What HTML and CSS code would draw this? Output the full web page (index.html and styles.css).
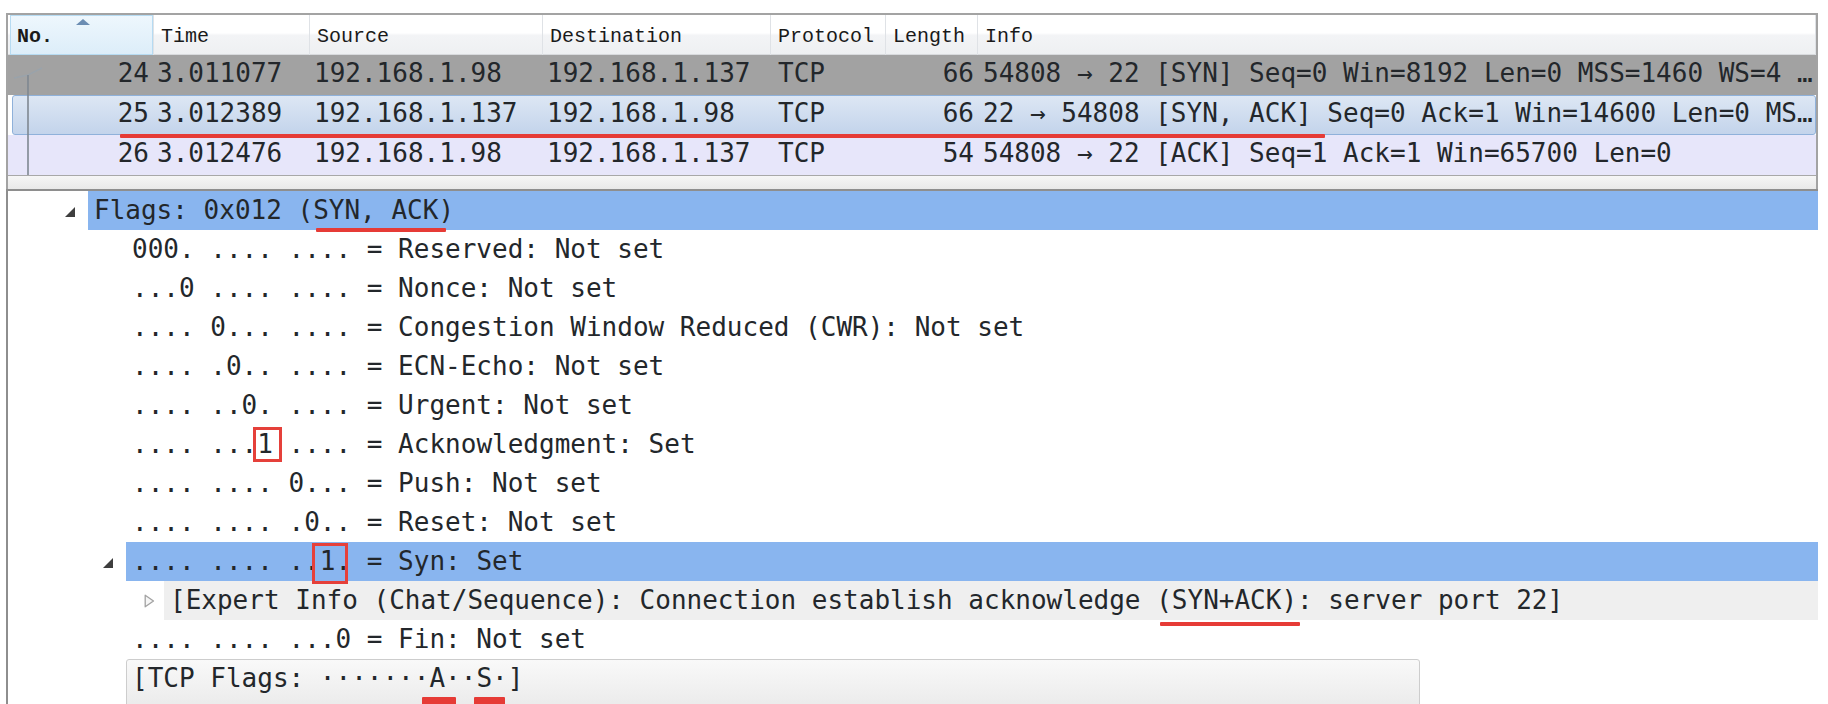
FILE: index.html
```html
<!DOCTYPE html>
<html>
<head>
<meta charset="utf-8">
<title>Wireshark TCP SYN/ACK</title>
<link rel="stylesheet" href="styles.css">
</head>
<body>
<div class="app">
  <section class="plist">
    <div class="phead">
      <div class="hcell sorted">No.<span class="sort"></span></div>
      <div class="hcell">Time</div>
      <div class="hcell">Source</div>
      <div class="hcell">Destination</div>
      <div class="hcell">Protocol</div>
      <div class="hcell">Length</div>
      <div class="hcell">Info</div>
    </div>
    <div class="prows">
      <div class="prow syn">
        <div class="c no">24</div><div class="c">3.011077</div><div class="c">192.168.1.98</div><div class="c">192.168.1.137</div><div class="c">TCP</div><div class="c len">66</div><div class="c">54808 → 22 [SYN] Seq=0 Win=8192 Len=0 MSS=1460 WS=4 …</div>
      </div>
      <div class="prow sel">
        <div class="c no">25</div><div class="c">3.012389</div><div class="c">192.168.1.137</div><div class="c">192.168.1.98</div><div class="c">TCP</div><div class="c len">66</div><div class="c">22 → 54808 [SYN, ACK] Seq=0 Ack=1 Win=14600 Len=0 MS…</div>
      </div>
      <div class="prow tcp">
        <div class="c no">26</div><div class="c">3.012476</div><div class="c">192.168.1.98</div><div class="c">192.168.1.137</div><div class="c">TCP</div><div class="c len">54</div><div class="c">54808 → 22 [ACK] Seq=1 Ack=1 Win=65700 Len=0</div>
      </div>
      <svg class="conv" width="60" height="120" viewBox="0 0 60 120">
        <path d="M6 23 L20 20 L34 13" fill="none" stroke="#9aa3ab" stroke-width="1.4"/>
        <path d="M20 20 V120" fill="none" stroke="#7f8891" stroke-width="1.6"/>
      </svg>
      <div class="ann-line"></div>
    </div>
    <div class="hscroll"></div>
  </section>

  <section class="details">
    <div class="drow l0 sel"><span class="arr"><svg width="10" height="10" viewBox="0 0 10 10"><path d="M10 0 L10 10 L0 10 Z" fill="#3e3e3e"/></svg></span><span class="lbl">Flags: 0x012 (<span class="ul ul-flags">SYN, ACK</span>)</span></div>
    <div class="drow l1"><span class="arr"></span><span class="lbl">000. .... .... = Reserved: Not set</span></div>
    <div class="drow l1"><span class="arr"></span><span class="lbl">...0 .... .... = Nonce: Not set</span></div>
    <div class="drow l1"><span class="arr"></span><span class="lbl">.... 0... .... = Congestion Window Reduced (CWR): Not set</span></div>
    <div class="drow l1"><span class="arr"></span><span class="lbl">.... .0.. .... = ECN-Echo: Not set</span></div>
    <div class="drow l1"><span class="arr"></span><span class="lbl">.... ..0. .... = Urgent: Not set</span></div>
    <div class="drow l1"><span class="arr"></span><span class="lbl">.... ...<span class="mk mk-ack">1</span> .... = Acknowledgment: Set</span></div>
    <div class="drow l1"><span class="arr"></span><span class="lbl">.... .... 0... = Push: Not set</span></div>
    <div class="drow l1"><span class="arr"></span><span class="lbl">.... .... .0.. = Reset: Not set</span></div>
    <div class="drow l1 sel"><span class="arr"><svg width="10" height="10" viewBox="0 0 10 10"><path d="M10 0 L10 10 L0 10 Z" fill="#3e3e3e"/></svg></span><span class="lbl">.... .... ..<span class="mk mk-syn">1</span>. = Syn: Set</span></div>
    <div class="drow l2 expert"><span class="arr arr-c"><svg width="11" height="14" viewBox="0 0 11 14"><path d="M1.2 1.2 L9.5 7 L1.2 12.8 Z" fill="#f6f6f6" stroke="#a2a2a2" stroke-width="1.3" stroke-linejoin="round"/></svg></span><span class="lbl">[Expert Info (Chat/Sequence): Connection establish acknowledge <span class="ul ul-expert">(SYN+ACK)</span>: server port 22]</span></div>
    <div class="drow l1"><span class="arr"></span><span class="lbl">.... .... ...0 = Fin: Not set</span></div>
    <div class="drow l1 tcpf"><span class="arr"></span><span class="lbl">[TCP Flags: ·······<span class="ul ul-a">A</span>··<span class="ul ul-s">S</span>·]</span></div>
  </section>
</div>
</body>
</html>
```
FILE: styles.css
```css
* {
  box-sizing: border-box;
  margin: 0;
  padding: 0;
}

html, body {
  background: #ffffff;
  width: 1828px;
  height: 704px;
  overflow: hidden;
}

.app {
  padding: 13px 0 0 6px;
}

/* ---------- packet list ---------- */
.plist {
  width: 1812px;
  border: 2px solid #a3a3a3;
  border-bottom: none;
}

.phead {
  display: grid;
  grid-template-columns: 146px 156px 233px 228px 115px 92px 1fr;
  height: 40px;
  border-bottom: 1px solid #d8dadd;
  background: linear-gradient(#ffffff 0%, #ffffff 46%, #f3f4f6 52%, #eef0f2 100%);
  font-family: "Liberation Mono", monospace;
  font-size: 20px;
  color: #1a1a1a;
}

.hcell {
  position: relative;
  border-right: 1px solid #dfe2e6;
  padding-left: 7px;
  padding-top: 4px;
  line-height: 36px;
  white-space: nowrap;
}

.hcell.sorted {
  margin-left: 2px;
  padding-left: 7px;
  font-weight: bold;
  background: linear-gradient(#eef7fd, #dcedf9);
  box-shadow: inset 0 0 0 1px #b6dbf2;
}

.sort {
  position: absolute;
  left: 66px;
  top: 4px;
  width: 0;
  height: 0;
  border-left: 7px solid transparent;
  border-right: 7px solid transparent;
  border-bottom: 6px solid #6b8db3;
}

.prows {
  position: relative;
}

.prow {
  position: relative;
  display: grid;
  grid-template-columns: 146px 156px 233px 228px 115px 92px 1fr;
  height: 40px;
  line-height: 36px;
  font-family: "DejaVu Sans Mono", monospace;
  font-size: 26px;
  color: #23272b;
  white-space: nowrap;
}

.prow.syn {
  background: #a2a2a2;
}

.prow.tcp {
  background: #e7e6fa;
}

.prow.sel::before {
  content: "";
  position: absolute;
  left: 4px;
  right: 0;
  top: 0;
  bottom: 0;
  border: 1px solid #8fb1da;
  border-radius: 3px;
  background: linear-gradient(#dde7f4, #c3d4eb);
}

.c {
  position: relative;
  overflow: hidden;
  padding-left: 3px;
}

.c:nth-child(3), .c:nth-child(4) { padding-left: 4px; }
.c:nth-child(5) { padding-left: 7px; }
.c:nth-child(7) { padding-left: 5px; }

.c.no {
  text-align: right;
  padding-right: 5px;
}

.c.len {
  text-align: right;
  padding-right: 4px;
}

.conv {
  position: absolute;
  left: 0;
  top: 0;
}

.ann-line {
  position: absolute;
  left: 112px;
  top: 79px;
  width: 1205px;
  height: 4px;
  border-radius: 1px;
  background: #e63b36;
}

.hscroll {
  height: 14px;
  border-top: 1px solid #a8a8a8;
  background: linear-gradient(#f6f6f6, #e9e9e9);
}

/* ---------- details ---------- */
.details {
  width: 1812px;
  height: 520px;
  border-left: 2px solid #8e8e8e;
  border-top: 2px solid #8e8e8e;
  font-family: "DejaVu Sans Mono", monospace;
  font-size: 26px;
  color: #23272b;
}

.drow {
  display: flex;
  height: 39px;
  line-height: 39px;
  white-space: nowrap;
}

.drow.l0 { padding-left: 52px; }
.drow.l1 { padding-left: 90px; }
.drow.l2 { padding-left: 128px; }

.arr {
  flex: none;
  width: 28px;
  display: flex;
  align-items: center;
  padding-left: 5px;
  padding-top: 3px;
}

.arr-c {
  padding-left: 8px;
  padding-top: 1px;
}

.lbl {
  flex: 1;
  padding-left: 6px;
}

.drow.sel .lbl {
  background: #89b5ef;
}

.drow.expert .lbl {
  background: #efefef;
}

.drow.tcpf {
  height: 45px;
}

.drow.tcpf .lbl {
  flex: none;
  width: 1294px;
  height: 48px;
  padding-left: 5px;
  border: 1px solid #cdcdcd;
  border-radius: 3px;
  background: linear-gradient(#f9f9f9, #ebebeb);
  line-height: 37px;
}

/* ---------- red annotations ---------- */
.ul, .mk {
  position: relative;
  display: inline-block;
  vertical-align: top;
}

.ul::after {
  content: "";
  position: absolute;
  height: 4px;
  border-radius: 1px;
  background: #e63b36;
}

.ul-flags::after { left: 3px; right: -8px; top: 37px; }
.ul-expert::after { left: 4px; right: -3px; top: 41px; }
.ul-a::after { left: -7px; right: -11px; top: 37px; height: 8px; }
.ul-s::after { left: -2px; right: -13px; top: 37px; height: 8px; }

.mk::after {
  content: "";
  position: absolute;
  border: 3px solid #e5403a;
}

.mk-ack::after { left: -4px; right: -9px; top: 2px; bottom: 2px; }
.mk-syn::after { left: -8px; right: -12px; top: 1px; bottom: -3px; }
```
